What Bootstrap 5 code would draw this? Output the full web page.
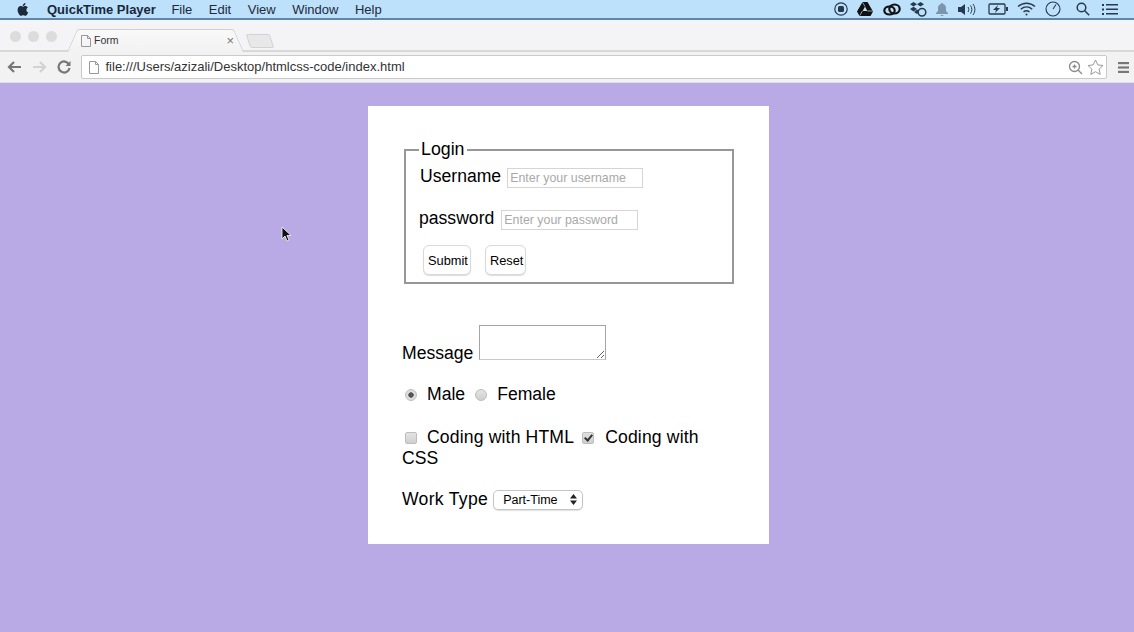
<!DOCTYPE html>
<html lang="en">
<head>
<meta charset="utf-8">
<title>Form</title>
<link href="https://cdn.jsdelivr.net/npm/bootstrap@5.3.0/dist/css/bootstrap.min.css" rel="stylesheet">
<style>
html,body{height:100%;}
body{background:#b9a9e5;font-family:"Liberation Sans",Arial,sans-serif;color:#000;overflow:hidden;position:relative;}
.menubar{height:20px;background:#bde0fb;border-bottom:2px solid #5e86ad;font-size:13px;color:#1d2a3a;padding-left:16px;line-height:17px;}
.menubar .apple{width:14px;height:15px;margin-right:17px;}
.menubar b{margin-right:15.500px;color:#17283c;}
.menubar span{margin-right:16.500px;}
.status{margin-left:auto;padding-right:16px;gap:9.300px;}
.status svg{display:block;}
.status .gapb{margin-left:2px;}
.status .gaps{margin-left:5px;}
.status .gapl{margin-left:3px;}
.tabstrip{height:32px;background:#f4f3f6;border-bottom:2px solid #d8d8d8;padding-left:10px;position:relative;}
.dots{padding-top:11px;}
.dot{width:11px;height:11px;border-radius:50%;background:#dcdcdc;margin-right:7px;}
.tabshape{width:167px;height:23px;margin-left:8px;margin-top:9px;font-size:10.500px;color:#333;padding-left:9px;gap:3px;position:relative;z-index:1;isolation:isolate;}
.tabshape::before,.tabshape::after{content:"";position:absolute;top:0;bottom:0;width:60%;background:linear-gradient(#f9f9f9,#f2f2f3);border-top:1px solid #cfcfcf;z-index:-1;}
.tabshape::before{left:0;border-left:1px solid #cfcfcf;border-top-left-radius:3px;transform:skewX(-24deg);}
.tabshape::after{right:0;border-right:1px solid #cfcfcf;border-top-right-radius:3px;transform:skewX(24deg);}
.tabx{margin-left:auto;margin-right:5px;font-size:13px;color:#777;}
.newtab{width:24px;height:14px;margin-left:9px;margin-top:14px;background:#e8e8e8;border:1px solid #d2d2d2;border-radius:2px;transform:skewX(18deg);}
.toolbar{height:31px;background:#f2f2f2;border-bottom:1px solid #dedede;padding-left:7px;}
.navico{margin-right:10px;display:block;}
.urlbar{width:1026px;height:24px;background:#fff;border:1px solid #c9c9c9;border-radius:2px;font-size:13px;color:#333;padding-left:7px;gap:6.500px;}
.urlend{margin-left:auto;margin-right:2px;gap:4px;}
.burger{margin-left:11px;}
.sheet{width:401px;height:438px;margin:23px 0 0 368px;background:#fff;padding:33px 34px;font-size:17.600px;line-height:21px;}
.loginset{border:2px solid #979797;width:330px;height:145px;margin:0 0 0 2px;padding:0 13px;position:relative;}
.loginset legend{float:none;width:auto;margin:0;padding:0 2px;font-size:17.800px;line-height:21px;height:21px;}
.rowline{display:flex;align-items:flex-start;}
.rowuser{margin:6px 0 0 1px;}
.rowpass{margin-top:20px;}
.rowbtns{display:flex;gap:14px;margin:15px 0 0 4px;}
.txtin{border:1px solid #d5d5d5;height:20px;font-size:12.400px;padding:0 2px;margin:2px 0 0;color:#333;border-radius:0;outline:0;font-family:inherit;}
.txtin::placeholder{color:#a9a9a9;opacity:1;}
.inuser{width:136px;margin-left:6px;}
.inpass{width:137px;margin-left:7px;}
.fakebtn{background:#fff;border:1px solid #d9d9d9;border-radius:6px;height:30px;padding:1px 4px 0;font-size:12.800px;color:#000;box-shadow:0 1px 1px #ddd;font-family:inherit;}
.btnsub{width:48px;}
.btnres{width:41px;}
.msgrow{margin-top:41px;}
.msgbox{width:127px;height:35px;border:1px solid #a5a5a5;border-bottom-color:#c9c9c9;border-radius:0;display:inline-block;margin:0 0 0 6px;vertical-align:-1px;}
.radiorow{margin:20px 0 0 3px;}
.optlabel{margin:0 10px 0 10px;}
.optlast{margin-left:10px;}
.coding{letter-spacing:.150px;margin-right:8px;}
.optlast.coding{margin-left:11px;margin-right:0;}
.checkblock{margin-top:22px;width:315px;}
.checkline{margin-left:3px;white-space:nowrap;}
.workrow{margin-top:20px;}
.worklabel{letter-spacing:.300px;}
.uibox{appearance:none;width:12px;height:12px;margin:0;background:linear-gradient(#e4e4e4,#cfcfcf);border:1px solid #bdbdbd;flex:none;position:relative;}
.uibox[type=radio]{border-radius:50%;}
.uibox[type=checkbox]{border-radius:2px;}
.uibox[type=radio]:checked{background:radial-gradient(circle,#555 0 2.400px,#ddd 3px);}
.uibox[type=checkbox]:checked{background:linear-gradient(#e0e0e0,#cfcfcf);}
.uibox[type=checkbox]:checked::after{content:"";position:absolute;left:3px;top:0;width:5px;height:8px;border:solid #333;border-width:0 2px 2px 0;transform:rotate(40deg);}
.worksel{width:90px;height:20px;border:1px solid #c5c5c5;border-radius:5px;background:#fff;font-size:12.500px;padding-left:9px;margin-left:5px;line-height:18px;box-shadow:0 1px 1px #e2e2e2;}
.workarrows{margin-left:auto;margin-right:5px;}
.cursorico{position:absolute;left:281px;top:226px;}
</style>
</head>
<body>
<div class="menubar d-flex align-items-center">
  <svg class="apple" viewBox="0 0 14 16"><path fill="#1d2a3a" d="M10.600 8.400c0-1.700 1.400-2.500 1.500-2.600-.8-1.200-2.100-1.300-2.500-1.400-1.100-.1-2.100.6-2.600.6-.6 0-1.400-.6-2.300-.6C3.500 4.400 2.400 5.100 1.800 6.100.6 8.200 1.500 11.300 2.700 13c.6.800 1.300 1.800 2.200 1.700.9 0 1.200-.6 2.300-.6s1.400.6 2.300.6c1 0 1.600-.9 2.100-1.700.7-1 1-1.900 1-2-.1 0-1.900-.7-2-2.600zM8.900 3.300c.5-.6.800-1.400.7-2.300-.7 0-1.600.5-2.100 1.100-.5.5-.9 1.400-.8 2.200.8.100 1.600-.4 2.200-1z"/></svg>
  <b>QuickTime Player</b><span>File</span><span>Edit</span><span>View</span><span>Window</span><span>Help</span>
  <div class="status d-flex align-items-center">
    <svg width="14" height="14" viewBox="0 0 14 14"><circle cx="7" cy="7" r="6.200" fill="none" stroke="#26394f" stroke-width="1.200"/><rect x="4" y="4" width="6" height="6" rx="1.500" fill="#26394f"/></svg>
    <svg width="16" height="14" viewBox="0 0 16 14"><path fill="#111" d="M5.500 0h5L16 9.500 13.500 14h-11L0 9.500z"/><path fill="#bde0fb" d="M8 4.500 10.300 9H5.700z"/><path stroke="#bde0fb" stroke-width=".7" d="M5.300 9 2.800 13.600M5.500 .3 8 4.500M10.300 9H15.700"/></svg>
    <svg width="18" height="13" viewBox="0 0 18 13" fill="none" stroke="#111" stroke-width="2.200"><ellipse cx="6.500" cy="7.500" rx="5.200" ry="4"/><ellipse cx="11.500" cy="6" rx="5.200" ry="4.500"/></svg>
    <svg width="17" height="15" viewBox="0 0 17 15" fill="#26394f"><path d="M3.500 0 7 2.300 3.500 4.600 0 2.300zM10.500 0 14 2.300l-3.500 2.300L7 2.300zM3.500 4.800 7 7.100 3.500 9.400 0 7.100zM7 7.500l2 1.300-1 2.500-1 .7-3-2z"/><circle cx="12" cy="10.300" r="3.800" fill="#bde0fb" stroke="#26394f" stroke-width="1.500"/></svg>
    <svg width="12" height="13" viewBox="0 0 12 13"><path fill="#7b95ad" d="M6 0c.6 0 1 .4 1 1 2 .5 3 2 3 4v3l2 2v1H0v-1l2-2V5c0-2 1-3.500 3-4 0-.6.400-1 1-1zM4.500 12h3c0 .6-.6 1-1.500 1s-1.500-.4-1.500-1z"/></svg>
    <svg width="19" height="13" viewBox="0 0 19 13" fill="none" stroke="#26394f"><path fill="#26394f" stroke="none" d="M0 4h3l4-3v11L3 9H0z"/><path d="M10 4c1 1.500 1 3.500 0 5M12.500 2.500c1.800 2.500 1.800 5.500 0 8M15 1c2.500 3.500 2.500 7.500 0 11"/></svg>
    <svg class="gapb" width="20" height="12" viewBox="0 0 20 12" fill="none" stroke="#26394f" stroke-width="1.300"><rect x="1" y="1" width="16" height="10" rx="1"/><path fill="#26394f" stroke="none" d="M18 4h2v4h-2zM10 2 5 7h3L7 10l5-5H9z"/></svg>
    <svg width="19" height="14" viewBox="0 0 19 14" fill="none" stroke="#26394f" stroke-width="1.500"><path d="M1 4.500c5-4.500 12-4.500 17 0M3.800 7.300c3.500-3 8-3 11.400 0M6.500 10c1.800-1.500 4.200-1.500 6 0"/><circle cx="9.500" cy="12.500" r="1" fill="#26394f" stroke="none"/></svg>
    <svg width="16" height="16" viewBox="0 0 16 16" fill="none" stroke="#26394f" stroke-width="1.100"><circle cx="8" cy="8" r="7"/><path d="M8 8 11 3.500"/></svg>
    <svg class="gaps" width="14" height="14" viewBox="0 0 14 14" fill="none" stroke="#26394f" stroke-width="1.500"><circle cx="5.500" cy="5.500" r="4.300"/><path d="m8.700 8.700 4.500 4.500"/></svg>
    <svg class="gapl" width="16" height="11" viewBox="0 0 16 11" fill="#26394f"><rect width="2" height="2" x="0" y="0"/><rect width="2" height="2" x="0" y="4.500"/><rect width="2" height="2" x="0" y="9"/><rect width="12" height="1.500" x="4" y="0"/><rect width="12" height="1.500" x="4" y="4.500"/><rect width="12" height="1.500" x="4" y="9"/></svg>
  </div>
</div>
<div class="tabstrip d-flex align-items-start">
  <div class="dots d-flex"><i class="dot"></i><i class="dot"></i><i class="dot"></i></div>
  <div class="tabshape d-flex align-items-center">
    <svg width="10" height="12" viewBox="0 0 10 12" fill="none" stroke="#999"><path d="M.5.500h6l3 3v8h-9zM6.500.500v3h3"/></svg>
    <span>Form</span><span class="tabx">×</span>
  </div>
  <div class="newtab"></div>
</div>
<div class="toolbar d-flex align-items-center">
  <svg class="navico" width="15" height="12" viewBox="0 0 15 12" fill="none" stroke="#777" stroke-width="2.200"><path d="M14 6H2M7 1 2 6l5 5"/></svg>
  <svg class="navico" width="15" height="12" viewBox="0 0 15 12" fill="none" stroke="#d2d2d2" stroke-width="2.200"><path d="M1 6h12M8 1l5 5-5 5"/></svg>
  <svg class="navico" width="14" height="14" viewBox="0 0 14 14" fill="none" stroke="#777" stroke-width="2.200"><path d="M12 4.500A5.500 5.500 0 1 0 12.500 8"/><path fill="#777" stroke="none" d="M13.500 1v5h-5z"/></svg>
  <div class="urlbar d-flex align-items-center">
    <svg width="10" height="13" viewBox="0 0 10 13" fill="none" stroke="#999"><path d="M.5.500h6l3 3v9h-9zM6.500.500v3h3"/></svg>
    <span>file:///Users/azizali/Desktop/htmlcss-code/index.html</span>
    <div class="urlend d-flex align-items-center">
      <svg width="15" height="15" viewBox="0 0 15 15" fill="none" stroke="#8a8a8a" stroke-width="1.300"><circle cx="6.500" cy="6.500" r="5"/><path d="m10 10 4 4M4.500 6.500h4M6.500 4.500v4"/></svg>
      <svg width="17" height="16" viewBox="0 0 17 16" fill="#fff" stroke="#999"><path d="m8.500 1 2.300 4.900 5.200.6-3.900 3.600 1.100 5.300-4.700-2.700-4.700 2.700 1.100-5.300L1 6.500l5.200-.6z"/></svg>
    </div>
  </div>
  <svg class="burger" width="11" height="11" viewBox="0 0 11 11" fill="#777"><rect width="11" height="2.200"/><rect width="11" height="2.200" y="4.400"/><rect width="11" height="2.200" y="8.800"/></svg>
</div>
<main class="sheet">
  <form>
    <fieldset class="loginset">
      <legend>Login</legend>
      <div class="rowline rowuser">
        <label for="u">Username</label>
        <input id="u" class="txtin inuser" type="text" placeholder="Enter your username">
      </div>
      <div class="rowline rowpass">
        <label for="p">password</label>
        <input id="p" class="txtin inpass" type="text" placeholder="Enter your password">
      </div>
      <div class="rowbtns">
        <button type="button" class="fakebtn btnsub">Submit</button>
        <button type="button" class="fakebtn btnres">Reset</button>
      </div>
    </fieldset>
    <div class="msgrow"><label for="m">Message</label><textarea id="m" class="msgbox"></textarea></div>
    <div class="radiorow d-flex align-items-center">
      <input class="uibox" type="radio" name="g" checked><span class="optlabel">Male</span>
      <input class="uibox" type="radio" name="g"><span class="optlast">Female</span>
    </div>
    <div class="checkblock">
      <span class="checkline d-flex align-items-center">
        <input class="uibox" type="checkbox"><span class="optlabel coding">Coding with HTML</span>
        <input class="uibox" type="checkbox" checked><span class="optlast coding">Coding with</span>
      </span>
      <span>CSS</span>
    </div>
    <div class="workrow d-flex align-items-center">
      <span class="worklabel">Work Type</span>
      <div class="worksel d-flex align-items-center">Part-Time
        <svg class="workarrows" width="7" height="11" viewBox="0 0 7 11" fill="#222"><path d="M3.500 0 7 4.500H0zM3.500 11 0 6.500h7z"/></svg>
      </div>
    </div>
  </form>
</main>
<svg class="cursorico" width="11" height="17" viewBox="0 0 11 17"><path fill="#111" stroke="#fff" stroke-width=".8" d="M1 1v12l3-3 2 5 2-1-2-4.500h4z"/></svg>
<script src="https://cdn.jsdelivr.net/npm/bootstrap@5.3.0/dist/js/bootstrap.bundle.min.js"></script>
</body>
</html>
